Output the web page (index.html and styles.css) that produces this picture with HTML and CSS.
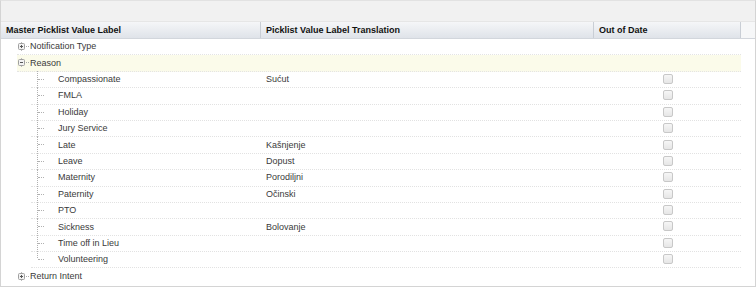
FILE: index.html
```html
<!DOCTYPE html>
<html>
<head>
<meta charset="utf-8">
<link rel="stylesheet" href="styles.css">
</head>
<body>
<div class="panel">
  <div class="toolbar"></div>
  <div class="head">
    <div class="hc h1">Master Picklist Value Label</div>
    <div class="hc h2">Picklist Value Label Translation</div>
    <div class="hc h3">Out of Date</div>
    <div class="hc h4"></div>
  </div>
  <div class="body">
    <div class="row top">
      <div class="cell c1"><span class="exp"><svg width="9" height="9" viewBox="0 0 9 9"><rect x="1.5" y="1.5" width="6" height="6" rx="1" fill="#f2f2f2" stroke="#a0a0a0"/><path d="M3 4.5h3M4.5 3v3" stroke="#555"/><path d="M4.5 0v1M4.5 8v1" stroke="#bbb"/></svg></span><span class="stub"></span>Notification Type</div>
    </div>
    <div class="row top sel">
      <div class="cell c1"><span class="exp"><svg width="9" height="9" viewBox="0 0 9 9"><rect x="1.5" y="1.5" width="6" height="6" rx="1" fill="#f2f2f2" stroke="#a0a0a0"/><path d="M3 4.5h3" stroke="#555"/><path d="M4.5 0v1M4.5 8v1" stroke="#bbb"/></svg></span><span class="stub"></span>Reason</div>
    </div>
    <div class="row child"><div class="cell c1"><span class="tl"></span>Compassionate</div><div class="cell c2">Sućut</div><div class="cell c3"><span class="cb"></span></div></div>
    <div class="row child"><div class="cell c1"><span class="tl"></span>FMLA</div><div class="cell c2"></div><div class="cell c3"><span class="cb"></span></div></div>
    <div class="row child"><div class="cell c1"><span class="tl"></span>Holiday</div><div class="cell c2"></div><div class="cell c3"><span class="cb"></span></div></div>
    <div class="row child"><div class="cell c1"><span class="tl"></span>Jury Service</div><div class="cell c2"></div><div class="cell c3"><span class="cb"></span></div></div>
    <div class="row child"><div class="cell c1"><span class="tl"></span>Late</div><div class="cell c2">Kašnjenje</div><div class="cell c3"><span class="cb"></span></div></div>
    <div class="row child"><div class="cell c1"><span class="tl"></span>Leave</div><div class="cell c2">Dopust</div><div class="cell c3"><span class="cb"></span></div></div>
    <div class="row child"><div class="cell c1"><span class="tl"></span>Maternity</div><div class="cell c2">Porodiljni</div><div class="cell c3"><span class="cb"></span></div></div>
    <div class="row child"><div class="cell c1"><span class="tl"></span>Paternity</div><div class="cell c2">Očinski</div><div class="cell c3"><span class="cb"></span></div></div>
    <div class="row child"><div class="cell c1"><span class="tl"></span>PTO</div><div class="cell c2"></div><div class="cell c3"><span class="cb"></span></div></div>
    <div class="row child"><div class="cell c1"><span class="tl"></span>Sickness</div><div class="cell c2">Bolovanje</div><div class="cell c3"><span class="cb"></span></div></div>
    <div class="row child"><div class="cell c1"><span class="tl"></span>Time off in Lieu</div><div class="cell c2"></div><div class="cell c3"><span class="cb"></span></div></div>
    <div class="row child last"><div class="cell c1"><span class="tl"></span>Volunteering</div><div class="cell c2"></div><div class="cell c3"><span class="cb"></span></div></div>
    <div class="row top end">
      <div class="cell c1"><span class="exp"><svg width="9" height="9" viewBox="0 0 9 9"><rect x="1.5" y="1.5" width="6" height="6" rx="1" fill="#f2f2f2" stroke="#a0a0a0"/><path d="M3 4.5h3M4.5 3v3" stroke="#555"/><path d="M4.5 0v1M4.5 8v1" stroke="#bbb"/></svg></span><span class="stub"></span>Return Intent</div>
    </div>
  </div>
</div>
</body>
</html>
```
FILE: styles.css
```css
html, body {
  margin: 0;
  padding: 0;
  background: #fff;
}
body {
  font-family: "Liberation Sans", Arial, sans-serif;
  font-size: 9px;
  color: #3a3a3a;
}
.panel {
  width: 754px;
  height: 285px;
  border: 1px solid #d4d4d4;
  border-top-color: #e2e2e2;
  display: flex;
  flex-direction: column;
  overflow: hidden;
}
.toolbar {
  height: 20px;
  background: #f1f1f1;
  border-bottom: 1px solid #e6e6e6;
}
.head {
  display: flex;
  height: 16px;
  background: linear-gradient(#f5f6f8, #dfe3e9);
  border-bottom: 1px solid #d2d6dc;
}
.hc {
  font-weight: bold;
  color: #111;
  font-size: 9px;
  line-height: 16px;
  padding-left: 5px;
  box-sizing: border-box;
  border-right: 1px solid #c9ced5;
}
.h1 { width: 260px; }
.h2 { width: 333px; }
.h3 { width: 147px; }
.h4 { flex: 1; border-right: none; background: #f6f7f8; }
.body {
  display: flex;
  flex-direction: column;
  padding-top: 0;
}
.row {
  display: flex;
  height: 16.4px;
  line-height: 16px;
  width: 740px;
  position: relative;
  box-sizing: border-box;
}
.row.top { border-bottom: 1px dotted #e4e4e4; margin-left: 16px; width: 724px; }
.row.top.sel { background: #fbfbea; }
.row.top.end { border-bottom: none; }
.row.child { border-bottom: 1px dotted #e2e2e2; margin-left: 30px; width: 710px; }
.cell {
  display: flex;
  align-items: center;
  box-sizing: border-box;
  white-space: nowrap;
  padding-bottom: 1px;
}
.row.top .c1 { width: 244px; }
.row.child .c1 { width: 230px; }
.row .c2 { width: 333px; padding-left: 5px; }
.row .c3 { width: 147px; padding-left: 69px; }
.exp {
  display: inline-flex;
  width: 9px;
  height: 9px;
}
.stub {
  display: inline-block;
  width: 3px;
  border-top: 1px dotted #aaa;
  margin-right: 1px;
}
.tl {
  position: relative;
  display: inline-block;
  width: 27px;
  align-self: stretch;
}
.tl::before {
  content: "";
  position: absolute;
  left: 6px;
  top: -1px;
  bottom: -2px;
  border-left: 1px dotted #b0b0b0;
}
.last .tl::before { bottom: 8px; }
.tl::after {
  content: "";
  position: absolute;
  left: 7px;
  top: 7px;
  width: 6px;
  border-top: 1px dotted #b0b0b0;
}
.cb {
  display: inline-block;
  width: 8px;
  height: 8px;
  border: 1px solid #c8c8c8;
  border-radius: 2px;
  background: linear-gradient(#f6f6f6, #e6e6e6);
}
```
